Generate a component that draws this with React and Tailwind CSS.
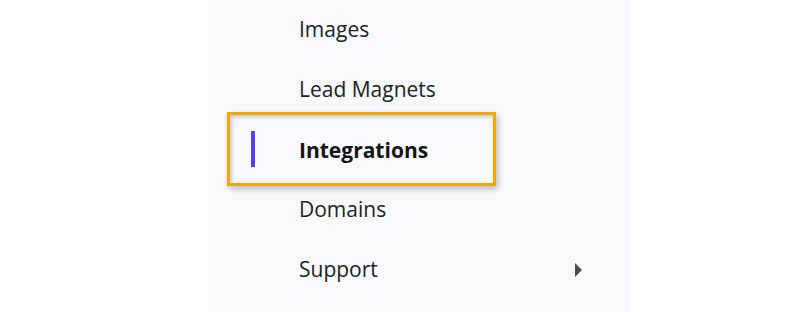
import React from 'react';

const items = [
  { label: 'Images' },
  { label: 'Lead Magnets' },
  { label: 'Integrations', active: true },
  { label: 'Domains' },
  { label: 'Support', submenu: true },
];

export default function App() {
  return (
    <div className="w-[808px] h-[312px] bg-white flex" style={{ fontFamily: '"Open Sans", sans-serif' }}>
      <div className="ml-[208px] w-[423px] h-full bg-[#f8f9fc] flex flex-col">
        {items.map((item) =>
          item.active ? (
            <div
              key={item.label}
              className="ml-[19px] w-[269px] h-[74px] -mt-[8px] -mb-[6px] relative z-10 flex items-center border-[3px] border-[#f5a800] shadow-[2px_3px_6px_rgba(0,0,0,0.25),inset_2px_2px_4px_rgba(0,0,0,0.2)]"
            >
              <span className="ml-[21px] w-1 h-9 bg-[#5b3cff]" />
              <span className="ml-[44px] mt-[3px] text-[21px] font-bold text-[#141414]">{item.label}</span>
            </div>
          ) : (
            <div key={item.label} className="h-[60px] shrink-0 flex items-center pl-[91px] pr-[49px]">
              <span className="flex-1 text-[21px] text-[#222]">{item.label}</span>
              {item.submenu && (
                <svg width="7" height="14" viewBox="0 0 7 14">
                  <path d="M0 0L7 7L0 14Z" fill="#4a4a55" />
                </svg>
              )}
            </div>
          )
        )}
      </div>
    </div>
  );
}
